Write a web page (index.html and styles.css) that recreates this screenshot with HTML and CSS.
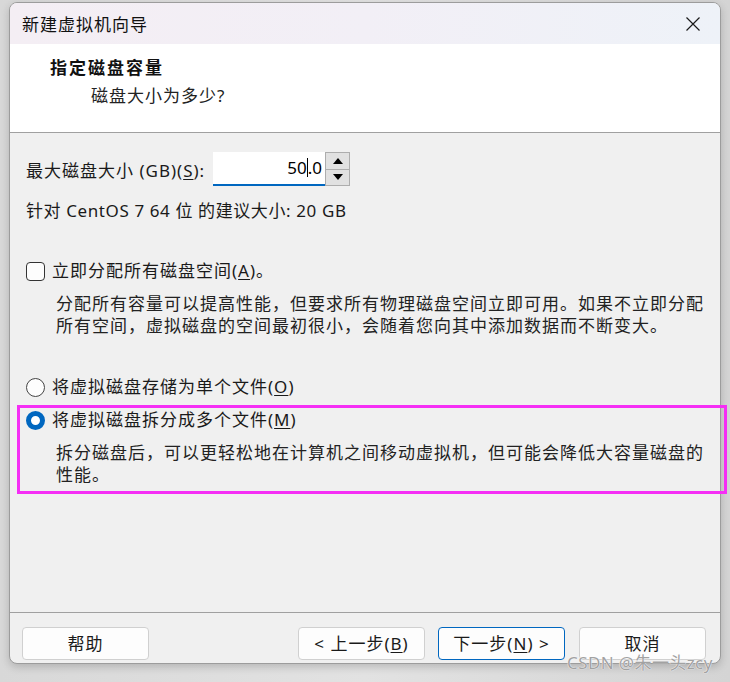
FILE: index.html
```html
<!DOCTYPE html>
<html lang="zh-CN">
<head>
<meta charset="utf-8">
<title>新建虚拟机向导</title>
<link rel="stylesheet" href="styles.css">
</head>
<body>
<div class="window">
  <div class="titlebar">
    <span class="title">新建虚拟机向导</span>
    <svg class="close" width="16" height="16" viewBox="0 0 16 16"><path d="M1.5 1.5 L14.5 14.5 M14.5 1.5 L1.5 14.5" stroke="#1a1a1a" stroke-width="1.2" fill="none"/></svg>
  </div>
  <div class="header">
    <div class="h-title">指定磁盘容量</div>
    <div class="h-sub">磁盘大小为多少?</div>
  </div>
  <div class="content">
    <div class="size-row">
      <span class="label">最大磁盘大小 (GB)(<u>S</u>):</span>
      <div class="spin">
        <div class="spin-input">50<span class="caret"></span>.0</div>
        <div class="spin-btns">
          <div class="spin-btn"><svg width="10" height="6" viewBox="0 0 10 6"><path d="M5 0 L10 6 L0 6 Z" fill="#000"/></svg></div>
          <div class="spin-btn"><svg width="10" height="6" viewBox="0 0 10 6"><path d="M0 0 L10 0 L5 6 Z" fill="#000"/></svg></div>
        </div>
      </div>
    </div>
    <div class="recommend">针对 CentOS 7 64 位 的建议大小: 20 GB</div>

    <div class="option opt-check">
      <span class="checkbox"></span>
      <span class="opt-label">立即分配所有磁盘空间(<u>A</u>)。</span>
    </div>
    <div class="desc">分配所有容量可以提高性能，但要求所有物理磁盘空间立即可用。如果不立即分配所有空间，虚拟磁盘的空间最初很小，会随着您向其中添加数据而不断变大。</div>

    <div class="option opt-radio1">
      <span class="radio"></span>
      <span class="opt-label">将虚拟磁盘存储为单个文件(<u>O</u>)</span>
    </div>
    <div class="option opt-radio2">
      <span class="radio checked"></span>
      <span class="opt-label">将虚拟磁盘拆分成多个文件(<u>M</u>)</span>
    </div>
    <div class="desc">拆分磁盘后，可以更轻松地在计算机之间移动虚拟机，但可能会降低大容量磁盘的性能。</div>
  </div>
  <div class="footer">
    <button class="btn btn-help">帮助</button>
    <div class="spacer"></div>
    <button class="btn btn-prev">&lt; 上一步(<u>B</u>)</button>
    <button class="btn btn-next default">下一步(<u>N</u>) &gt;</button>
    <button class="btn btn-cancel">取消</button>
  </div>
</div>
<div class="highlight"></div>
<div class="watermark">CSDN @朱一头zcy</div>
</body>
</html>
```
FILE: styles.css
```css
html, body {
  margin: 0;
  padding: 0;
}
body {
  width: 730px;
  height: 682px;
  overflow: hidden;
  position: relative;
  background: linear-gradient(90deg, #d8d8d8 0%, #e2e2e2 50%, #d4d4d4 100%);
  font-family: "Noto Sans", "Noto Sans CJK SC", sans-serif;
  font-size: 17px;
  letter-spacing: 1px;
  color: #1a1a1a;
}
u {
  text-decoration: underline;
  text-underline-offset: 2px;
}
.window {
  box-sizing: border-box;
  margin: 2px 0 0 9px;
  width: 712px;
  height: 662px;
  border: 1px solid #9c9c9c;
  border-radius: 8px;
  overflow: hidden;
  background: #f0f0f0;
  display: flex;
  flex-direction: column;
  box-shadow: 0 3px 8px rgba(0, 0, 0, 0.18);
}
.titlebar {
  height: 41px;
  flex: none;
  display: flex;
  align-items: center;
  justify-content: space-between;
  padding: 0 19px 0 12px;
  background: linear-gradient(90deg, #f4eef4 0%, #f2eff6 50%, #eef2f8 100%);
}
.title {
  font-size: 17px;
  letter-spacing: 1px;
  color: #111;
}
.close {
  display: block;
}
.header {
  flex: none;
  height: 89px;
  box-sizing: border-box;
  background: #fff;
  border-bottom: 1px solid #a0a0a0;
  padding: 12px 0 0 40px;
}
.h-title {
  font-weight: bold;
  font-size: 17px;
  line-height: 24px;
  letter-spacing: 2px;
  color: #111;
}
.h-sub {
  margin: 4px 0 0 41px;
  line-height: 24px;
  color: #222;
}
.content {
  flex: 1;
  padding: 19px 0 0 16px;
}
.size-row {
  display: flex;
  align-items: center;
  height: 34px;
}
.label {
  width: 187px;
  letter-spacing: 1px;
}
.spin {
  display: flex;
  height: 34px;
}
.spin-input {
  box-sizing: border-box;
  width: 112px;
  height: 34px;
  background: #fff;
  border-bottom: 2px solid #0067c0;
  text-align: right;
  padding: 0 3px 0 0;
  line-height: 32px;
  font-size: 17px;
  letter-spacing: 0;
  color: #000;
}
.caret {
  display: inline-block;
  width: 1px;
  height: 19px;
  background: #000;
  vertical-align: -3px;
}
.spin-btns {
  box-sizing: border-box;
  width: 25px;
  height: 34px;
  border: 1px solid #adadad;
  display: flex;
  flex-direction: column;
  background: #adadad;
  gap: 1px;
}
.spin-btn {
  flex: 1;
  background: #e1e1e1;
  display: flex;
  align-items: center;
  justify-content: center;
}
.spin-btn svg {
  display: block;
}
.recommend {
  margin-top: 14px;
  line-height: 22px;
  letter-spacing: 0.6px;
}
.option {
  display: flex;
  align-items: center;
  height: 22px;
}
.opt-check {
  margin-top: 38px;
}
.opt-radio1 {
  margin-top: 39px;
}
.opt-radio2 {
  margin-top: 11px;
}
.checkbox {
  box-sizing: border-box;
  width: 19px;
  height: 19px;
  border: 1px solid #333;
  border-radius: 4px;
  background: #fdfdfd;
  margin-right: 7px;
}
.radio {
  box-sizing: border-box;
  width: 19px;
  height: 19px;
  border: 1px solid #444;
  border-radius: 50%;
  background: #fdfdfd;
  margin-right: 7px;
}
.radio.checked {
  border: 5px solid #0067c0;
  background: #fff;
}
.opt-label {
  line-height: 22px;
}
.desc {
  margin: 11px 0 0 30px;
  width: 660px;
  line-height: 22px;
  color: #222;
}
.footer {
  flex: none;
  box-sizing: border-box;
  height: 51px;
  border-top: 1px solid #a0a0a0;
  display: flex;
  align-items: flex-start;
  padding: 14px 14px 0 12px;
}
.spacer {
  flex: 1;
}
.btn {
  box-sizing: border-box;
  width: 127px;
  height: 33px;
  border: 1px solid #d0d0d0;
  border-radius: 4px;
  background: #fdfdfd;
  font-family: "Noto Sans", "Noto Sans CJK SC", sans-serif;
  font-size: 17px;
  letter-spacing: 1px;
  color: #1a1a1a;
  padding: 0;
  line-height: 30px;
}
.btn-next {
  margin-left: 13px;
  border-color: #0067c0;
}
.btn-cancel {
  margin-left: 14px;
}
.highlight {
  position: absolute;
  left: 17px;
  top: 405px;
  width: 704px;
  height: 83px;
  border: 3px solid #f52ef5;
}
.watermark {
  position: absolute;
  left: 567px;
  top: 655px;
  font-size: 17px;
  letter-spacing: 0.4px;
  line-height: 16px;
  color: #a2a2a2;
  text-shadow: 0 0 1px #fff, 0 0 1px #fff;
}
```
